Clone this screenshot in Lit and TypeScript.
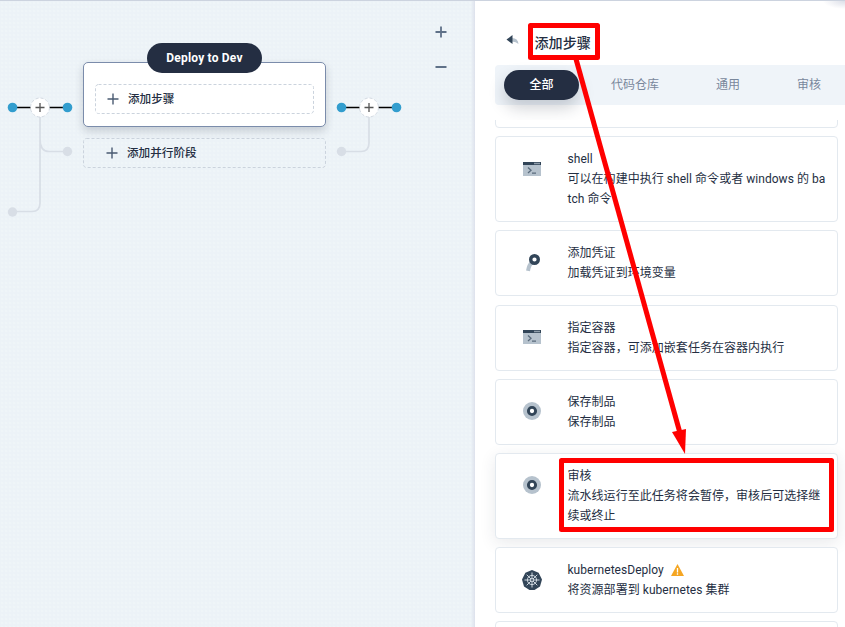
import { LitElement, html, css, svg, nothing } from "lit";
import { customElement } from "lit/decorators.js";

type Icon = "terminal" | "key" | "disc" | "kube";
interface Step { icon: Icon; title: string; text: string; warn?: boolean; active?: boolean }

const STEPS: Step[] = [
  { icon: "terminal", title: "shell", text: "可以在构建中执行 shell 命令或者 windows 的 batch 命令" },
  { icon: "key", title: "添加凭证", text: "加载凭证到环境变量" },
  { icon: "terminal", title: "指定容器", text: "指定容器，可添加嵌套任务在容器内执行" },
  { icon: "disc", title: "保存制品", text: "保存制品" },
  { icon: "disc", title: "审核", text: "流水线运行至此任务将会暂停，审核后可选择继续或终止", active: true },
  { icon: "kube", title: "kubernetesDeploy", text: "将资源部署到 kubernetes 集群", warn: true },
];

const ICONS = {
  terminal: svg`<path d="M1 3h18v14H1z" fill="#b6c2cd"/><path d="M1 3h18v3H1z" fill="#324558"/>
    <path d="M12.300 4.500h1.400m.6 0h1.400m.6 0h1.400" stroke="#b6c2cd" stroke-width="1.400"/>
    <path d="M6 8.500l3 2.700-3 2.700M10 14.200h4" fill="none" stroke="#5a6b7c" stroke-width="1.300"/>`,
  key: svg`<path d="M9.800 9.500Q7 12 6 17.800" fill="none" stroke="#b6c2cd" stroke-width="4"/>
    <circle cx="12.500" cy="6.500" r="3.800" fill="#fff" stroke="#324558" stroke-width="3.400"/>`,
  disc: svg`<circle cx="10" cy="10" r="9" fill="#b6c2cd"/><circle cx="10" cy="10" r="3.600" fill="#fff" stroke="#324558" stroke-width="2.900"/>`,
  kube: svg`<path d="M10 0l6.600 2.700L20 9.500l-2 7L12.500 20h-5L2 16.500 0 9.500 3.400 2.700z" fill="#324558"/>
    <g fill="none" stroke="#cfd8e0" stroke-width="1"><circle cx="10" cy="10" r="4.600"/><circle cx="10" cy="10" r="1.500"/>
    <path d="M10 2.500v6M10 11.500v6M2.500 10h6M11.500 10h6M4.700 4.700l4.300 4.300M11 11l4.300 4.300M15.300 4.700L11 9M9 11l-4.300 4.300"/></g>`,
};

@customElement("app-root")
export class AppRoot extends LitElement {
  static styles = css`
    :host { display: flex; position: relative; width: 845px; height: 627px; overflow: hidden; box-sizing: border-box;
      border-top: 1px solid #ccd3df; background: #fff; color: #242e42; font: 12px/20px Roboto, "Noto Sans CJK SC", sans-serif; }
    * { box-sizing: border-box; }
    svg { display: block; }
    .canvas { position: relative; flex: 0 0 475px; background-color: #ecf2f7;
      background-image: linear-gradient(to left, #dde1ec, rgba(221,225,236,0) 4px), radial-gradient(circle at 2px 2px, #eff5f8 0.8px, rgba(239,245,248,0) 1.8px); background-size: 100% 100%, 4px 4px; }
    .links { position: absolute; inset: 0; }
    .stage { position: absolute; left: 83px; top: 61px; width: 243px; }
    .card { height: 65px; border: 1px solid #7b8cab; border-radius: 5px; background: #fff; padding: 21px 11px; box-shadow: 0 4px 8px rgba(36,46,66,.2); }
    .name { position: absolute; left: 64px; top: -19px; width: 115px; height: 30px; border-radius: 15px; background: #242e42;
      color: #fff; font-weight: 700; line-height: 30px; text-align: center; letter-spacing: .2px; }
    .add { display: flex; align-items: center; gap: 9px; height: 30px; padding-left: 12px; font-weight: 500; font-size: 11.6px; }
    .dash { position: relative; }
    .frame { position: absolute; inset: 0; }
    .parallel { margin-top: 11px; padding-left: 23px; }
    .panel { flex: 1; min-width: 0; padding-left: 20px; display: flex; flex-direction: column;
      background: radial-gradient(ellipse 22px 8px at 100% 0, #dcdfe8, #fff); }
    .head { display: flex; align-items: center; height: 64px; padding: 19px 0 0 11px; gap: 15.5px; font-size: 14.1px; font-weight: 500; }
    .back { margin-top: -5px; }
    .tabs { flex: none; height: 40px; background: #eff4f9; border-radius: 4px 0 0 4px; display: flex; align-items: center; padding-left: 9px; color: #79879c; white-space: nowrap; }
    .tab { flex: none; }
    .on { width: 75px; height: 30px; line-height: 31px; text-align: center; border-radius: 15px; background: #242e42; color: #fff; font-weight: 500; box-shadow: 0 8px 16px rgba(36,46,66,.22); margin-right: 32px; }
    .repo { margin-right: 57px; }
    .common { margin-right: 57px; }
    .list { margin-top: 15px; flex: 1; min-height: 0; overflow: hidden; padding: 0 7px 0 20px; margin-left: -20px; }
    .step { display: flex; align-items: flex-start; border: 1px solid #e3e9ef; border-radius: 4px; min-height: 66px; padding: 12px 10px 12px 26px; margin-bottom: 8.17px; background: #fff; }
    .first { margin-top: -58px; margin-bottom: 8.2px; }
    .active { box-shadow: 0 4px 16px rgba(36,46,66,.1); }
    .icon { flex: none; width: 20px; margin: 9.6px 25.5px 0 0; }
    .body { flex: 1; word-break: break-all; letter-spacing: .04px; }
    .title { display: flex; align-items: center; gap: 7px; }
    .marks { position: absolute; left: 0; top: -1px; pointer-events: none; }
  `;

  plus() {
    return html`<svg width="12" height="12" viewBox="0 0 12 12"><path d="M6 .5v11M.5 6h11" stroke="#4a5b72" stroke-width="1.400"/></svg>`;
  }

  frame(w: number) {
    return html`<svg class="frame" width=${w} height="30"><rect x=".5" y=".5" width=${w - 1} height="29" rx="3" fill="none" stroke="#cbd3dd" stroke-dasharray="3 2"/></svg>`;
  }

  node(x: number) {
    return svg`<path d="M${x - 28} 106.500h56" stroke="#000" stroke-width="1.600"/>
      <circle cx=${x - 27.5} cy="106.500" r="4.800" fill="#329dce"/><circle cx=${x + 27.5} cy="106.500" r="4.800" fill="#329dce"/>
      <circle cx=${x} cy="106.500" r="9.500" fill="#fff" stroke="#d4dae2" stroke-dasharray="3 2"/>
      <path d="M${x} 102v9M${x - 4.5} 106.500h9" stroke="#555" stroke-width="1.300"/>`;
  }

  step(s: Step) {
    return html`<article class="step ${s.active ? "active" : ""}">
      <svg class="icon" width="20" height="20" viewBox="0 0 20 20">${ICONS[s.icon]}</svg>
      <div class="body"><div class="title">${s.title}${s.warn
        ? html`<svg width="13" height="12" viewBox="0 0 13 12"><path d="M6.500 0L13 12H0z" fill="#f5a623"/><path d="M6.500 4v4.500M6.500 9.300v1.400" stroke="#fff" stroke-width="1.300"/></svg>`
        : nothing}</div><div>${s.text}</div></div>
    </article>`;
  }

  render() {
    return html`
      <section class="canvas">
        <svg class="links" width="474" height="626">
          <g fill="none" stroke="#d8dee6" stroke-width="1.700">
            <path d="M40 116v86q0 8.500-8 8.500H12.500M40 138q0 12.500 9 12.500H67M369 116v26q0 8.500-8 8.500H341"/></g>
          <g fill="#d8dee6"><circle cx="12.500" cy="211" r="4.700"/><circle cx="67.500" cy="150.500" r="4.700"/><circle cx="341.500" cy="150.500" r="4.700"/></g>
          ${this.node(40)}${this.node(369)}
          <path d="M435.500 31h11M441 25.500v11M435.500 66h11" stroke="#5f7188" stroke-width="1.800"/>
        </svg>
        <div class="stage">
          <div class="card"><div class="add dash">${this.frame(219)}${this.plus()}<span>添加步骤</span></div></div>
          <div class="name">Deploy to Dev</div>
          <div class="add dash parallel">${this.frame(243)}${this.plus()}<span>添加并行阶段</span></div>
        </div>
      </section>
      <aside class="panel">
        <header class="head">
          <svg class="back" width="13" height="10" viewBox="0 0 13 10"><path d="M6 3Q12 3 12.500 9Q10 6.500 6 6.500z" fill="#b6c2cd"/><path d="M6.500 0v9L.5 4.500z" fill="#324558"/></svg>
          <span>添加步骤</span>
        </header>
        <nav class="tabs"><span class="tab on">全部</span><span class="tab repo">代码仓库</span><span class="tab common">通用</span><span class="tab">审核</span></nav>
        <div class="list"><div class="step first"></div>${STEPS.map((s) => this.step(s))}<div class="step"></div></div>
      </aside>
      <svg class="marks" width="845" height="627">
        <g fill="none" stroke="#f00" stroke-width="5" stroke-linejoin="round"><rect x="530.500" y="25.500" width="67" height="32"/><rect x="561.500" y="460.500" width="270" height="69"/><path d="M576 59L680 433"/></g>
        <path d="M672 432l14-3-1 25z" fill="#f00"/>
      </svg>`;
  }
}
